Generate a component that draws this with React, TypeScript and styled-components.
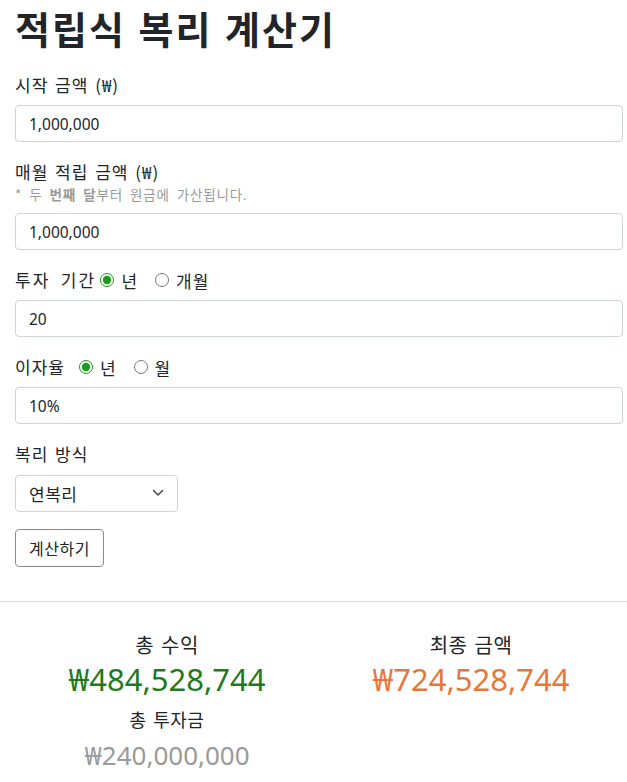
import React, { useState } from "react";
import styled, { createGlobalStyle } from "styled-components";

const Global = createGlobalStyle`
  html, body { margin: 0; padding: 0; background: #fff; }
  body {
    font-family: "Noto Sans", "Noto Sans CJK KR", sans-serif;
    color: #212529;
  }
  * { box-sizing: border-box; }
`;

const Page = styled.div`
  padding: 5px 4px 20px 15px;
`;

const Title = styled.h1`
  margin: 0 0 22px;
  font-family: "Noto Sans CJK KR", sans-serif;
  font-size: 38px;
  line-height: 46px;
  font-weight: 700;
  letter-spacing: 2px;
  word-spacing: 2px;
  color: #212529;
`;

const Field = styled.div`
  display: flex;
  flex-direction: column;
  margin-bottom: 18px;
`;

const LabelRow = styled.div<{ $tight?: boolean }>`
  display: flex;
  align-items: center;
  height: 24px;
  margin-bottom: ${(p) => (p.$tight ? "0" : "8px")};
`;

const LabelText = styled.span<{ $wide?: boolean }>`
  font-family: "Noto Sans CJK KR", sans-serif;
  font-size: 17px;
  line-height: 24px;
  letter-spacing: ${(p) => (p.$wide ? "2.2px" : "1px")};
  word-spacing: ${(p) => (p.$wide ? "4px" : "2px")};
`;

const Hint = styled.div`
  font-family: "Noto Sans CJK KR", sans-serif;
  font-size: 13.5px;
  line-height: 20px;
  letter-spacing: 0.8px;
  word-spacing: 3.3px;
  color: #999;
  margin-bottom: 9px;

  strong { font-weight: 700; }
`;

const RadioOption = styled.label<{ $gap: number }>`
  display: inline-flex;
  align-items: center;
  font-family: "Noto Sans CJK KR", sans-serif;
  font-size: 17px;
  letter-spacing: 1px;
  margin-left: ${(p) => p.$gap}px;
  cursor: pointer;
`;

const Radio = styled.input`
  width: 14px;
  height: 14px;
  margin: 0 7px 0 0;
  accent-color: #1f9a1f;
`;

const TextInput = styled.input`
  width: 100%;
  height: 37px;
  padding: 0 13px;
  border: 1px solid #ced4da;
  border-radius: 4px;
  font-family: "Noto Sans", "Noto Sans CJK KR", sans-serif;
  font-size: 15.5px;
  color: #212529;
  background: #fff;
  outline: none;
`;

const SelectWrap = styled.div`
  position: relative;
  width: 163px;
  margin-top: 1px;
`;

const Select = styled.select`
  appearance: none;
  width: 100%;
  height: 37px;
  padding: 0 13px;
  border: 1px solid #ced4da;
  border-radius: 4px;
  font-family: "Noto Sans CJK KR", sans-serif;
  font-size: 17px;
  letter-spacing: 0.5px;
  color: #212529;
  background: #fff;
  outline: none;
`;

const Chevron = styled.svg`
  position: absolute;
  right: 14px;
  top: 14px;
  pointer-events: none;
`;

const Button = styled.button`
  height: 38px;
  padding: 0 13px;
  border: 1px solid #8a8a8a;
  border-radius: 4px;
  background: #fff;
  font-family: "Noto Sans CJK KR", sans-serif;
  font-size: 16px;
  letter-spacing: 0.5px;
  color: #212529;
  margin-top: -1px;
`;

const Divider = styled.hr`
  border: none;
  border-top: 1px solid #d6d6d6;
  margin: 34px -4px 0 -15px;
`;

const Results = styled.div`
  display: grid;
  grid-template-columns: 1fr 1fr;
  padding-top: 29px;
`;

const ResultCol = styled.div`
  display: flex;
  flex-direction: column;
  align-items: center;
`;

const ResultLabel = styled.div<{ $small?: boolean }>`
  font-family: "Noto Sans CJK KR", sans-serif;
  font-size: ${(p) => (p.$small ? "18px" : "20px")};
  line-height: ${(p) => (p.$small ? "24px" : "28px")};
  margin-top: ${(p) => (p.$small ? "8px" : "0")};
  letter-spacing: 0.5px;
  word-spacing: 2px;
  color: #212529;
`;

const Amount = styled.div<{ $color: string; $small?: boolean }>`
  font-family: "Noto Sans", "Noto Sans CJK KR", sans-serif;
  font-size: ${(p) => (p.$small ? "26px" : "31px")};
  line-height: ${(p) => (p.$small ? "36px" : "40px")};
  margin-top: ${(p) => (p.$small ? "6px" : "0")};
  color: ${(p) => p.$color};
`;

export default function App() {
  const [period, setPeriod] = useState("year");
  const [rate, setRate] = useState("year");
  return (
    <Page>
      <Global />
      <Title>적립식 복리 계산기</Title>

      <Field>
        <LabelRow>
          <LabelText>시작 금액 (₩)</LabelText>
        </LabelRow>
        <TextInput defaultValue="1,000,000" />
      </Field>

      <Field>
        <LabelRow $tight>
          <LabelText>매월 적립 금액 (₩)</LabelText>
        </LabelRow>
        <Hint>
          * 두 <strong>번째 달</strong>부터 원금에 가산됩니다.
        </Hint>
        <TextInput defaultValue="1,000,000" />
      </Field>

      <Field>
        <LabelRow>
          <LabelText $wide>투자 기간</LabelText>
          <RadioOption $gap={4}>
            <Radio type="radio" name="period" checked={period === "year"} onChange={() => setPeriod("year")} />년
          </RadioOption>
          <RadioOption $gap={17}>
            <Radio type="radio" name="period" checked={period === "month"} onChange={() => setPeriod("month")} />개월
          </RadioOption>
        </LabelRow>
        <TextInput defaultValue="20" />
      </Field>

      <Field>
        <LabelRow>
          <LabelText>이자율</LabelText>
          <RadioOption $gap={14}>
            <Radio type="radio" name="rate" checked={rate === "year"} onChange={() => setRate("year")} />년
          </RadioOption>
          <RadioOption $gap={17}>
            <Radio type="radio" name="rate" checked={rate === "month"} onChange={() => setRate("month")} />월
          </RadioOption>
        </LabelRow>
        <TextInput defaultValue="10%" />
      </Field>

      <Field>
        <LabelRow>
          <LabelText>복리 방식</LabelText>
        </LabelRow>
        <SelectWrap>
          <Select defaultValue="year">
            <option value="year">연복리</option>
            <option value="month">월복리</option>
          </Select>
          <Chevron width="12" height="8" viewBox="0 0 12 8">
            <path d="M1.5 1.5 L6 6 L10.5 1.5" fill="none" stroke="#444" strokeWidth="1.5" strokeLinecap="round" strokeLinejoin="round" />
          </Chevron>
        </SelectWrap>
      </Field>

      <div>
        <Button>계산하기</Button>
      </div>

      <Divider />

      <Results>
        <ResultCol>
          <ResultLabel>총 수익</ResultLabel>
          <Amount $color="#1d7a1d">₩484,528,744</Amount>
          <ResultLabel $small>총 투자금</ResultLabel>
          <Amount $color="#9a9a9a" $small>₩240,000,000</Amount>
        </ResultCol>
        <ResultCol>
          <ResultLabel>최종 금액</ResultLabel>
          <Amount $color="#e8763a">₩724,528,744</Amount>
        </ResultCol>
      </Results>
    </Page>
  );
}
